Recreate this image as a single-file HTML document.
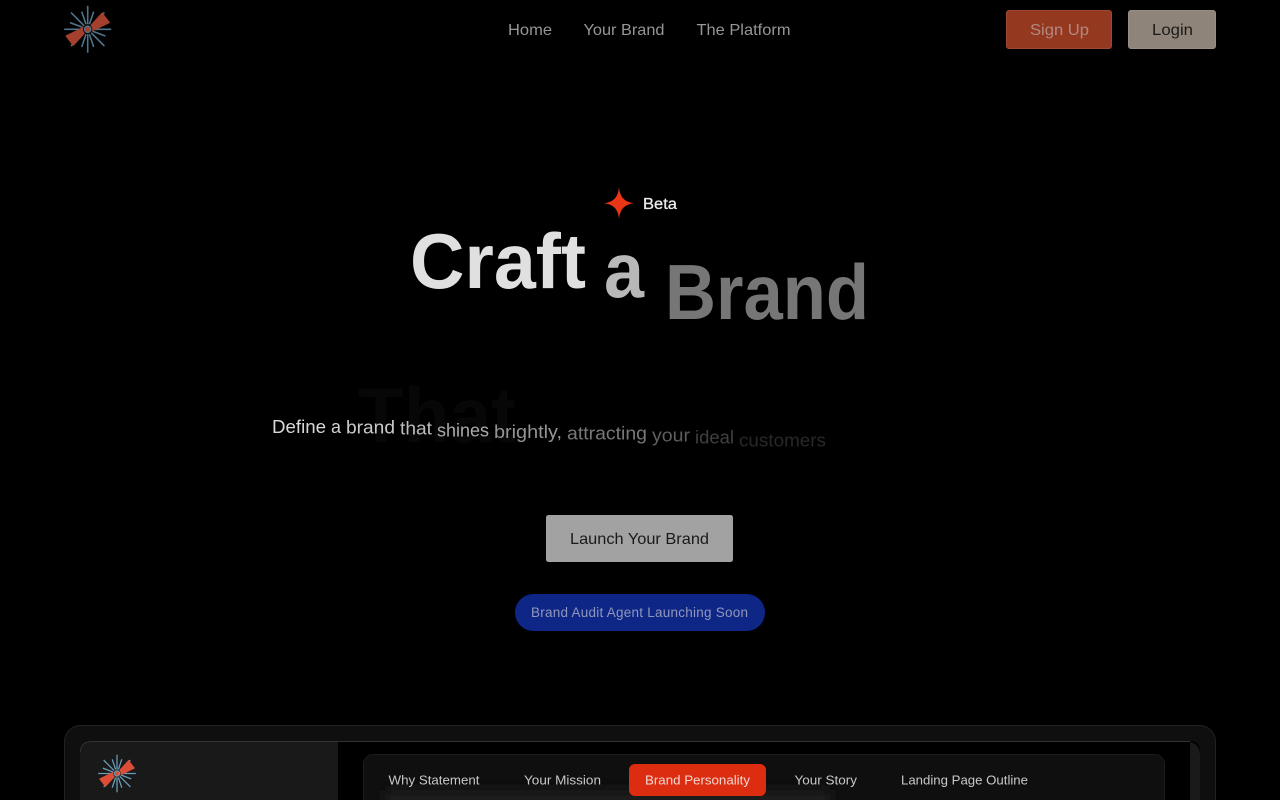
<!DOCTYPE html>
<html lang="en">
<head>
<meta charset="utf-8">
<title>Craft a Brand</title>
<style>
html,body{margin:0;padding:0;background:#000;width:1280px;height:800px;overflow:hidden}
svg{display:block;position:absolute;left:0;top:0}
text{font-family:"Liberation Sans",sans-serif}
</style>
</head>
<body>
<svg width="1280" height="800" viewBox="0 0 1280 800" xmlns="http://www.w3.org/2000/svg">
<defs>
<filter id="b6" x="-20%" y="-150%" width="140%" height="400%"><feGaussianBlur stdDeviation="6"/></filter>
<clipPath id="tabclip"><rect x="364" y="755" width="800" height="70" rx="10"/></clipPath>
<g id="rays">
<path d="M0-23.5V-5M0 5V23.5M-23.5 0H-5M5 0H23.5M-16.7-16.7L-3.5-3.5M3.5 3.5L16.7 16.7M-16.7 16.7L-3.5 3.5M3.5-3.5L16.7-16.7M-6-17.7L-1.7-5M1.7 5L6 17.7M6-17.7L1.7-5M-1.7 5L-6 17.7M-17.7-6.7L-5-1.9M5 1.9L17.7 6.7M-17.7 6.7L-5 1.9M5-1.9L17.7-6.7" fill="none"/>
</g>
<path id="wedges" d="M3-4.5L14.5-17L22.5-6.5L4 2.5ZM-3 4.5L-14.5 17L-22.5 6.5L-4-2.5Z"/>
</defs>
<rect width="1280" height="800" fill="#000"/>

<!-- nav logo -->
<g transform="translate(87.7 29.3)">
<use href="#rays" stroke="#4f7389" stroke-width="1.6"/>
<use href="#wedges" fill="#a5402f"/>
<circle r="4.7" fill="#000"/>
<circle r="3.9" fill="#4f7389"/>
<rect x="-2.3" y="-2.3" width="4.6" height="4.6" fill="#a5402f"/>
</g>

<!-- nav links -->
<g font-size="16" fill="#969696">
<text x="508" y="35" textLength="44" lengthAdjust="spacingAndGlyphs">Home</text>
<text x="583.5" y="35" textLength="81" lengthAdjust="spacingAndGlyphs">Your Brand</text>
<text x="696.5" y="35" textLength="94" lengthAdjust="spacingAndGlyphs">The Platform</text>
</g>

<!-- nav buttons -->
<rect x="1006.5" y="10.5" width="105" height="38" rx="2.5" fill="#943820" stroke="#9e4830"/>
<text x="1030" y="35" font-size="16" fill="#b08a80" textLength="59" lengthAdjust="spacingAndGlyphs">Sign Up</text>
<rect x="1128.5" y="10.5" width="87" height="38" rx="2.5" fill="#8e847a" stroke="#988e84"/>
<text x="1152" y="35" font-size="16" fill="#1c1a18" textLength="41" lengthAdjust="spacingAndGlyphs">Login</text>

<!-- beta -->
<path d="M619 187Q620 201.9 634 203.2Q620 204.5 619 219Q618 204.5 604 203.2Q618 201.9 619 187Z" fill="#ea3519"/>
<text x="643" y="209" font-size="15.5" fill="#eee" stroke="#eee" stroke-width=".25" textLength="34" lengthAdjust="spacingAndGlyphs">Beta</text>

<!-- headline -->
<g font-size="78" font-weight="700">
<text x="410" y="288" fill="#e0e0e0" textLength="176" lengthAdjust="spacingAndGlyphs">Craft</text>
<text x="604" y="297" fill="#b8b8b8" textLength="40" lengthAdjust="spacingAndGlyphs">a</text>
<text x="665" y="319" fill="#767676" textLength="204" lengthAdjust="spacingAndGlyphs">Brand</text>
<text x="358" y="442" fill="#070707" textLength="158" lengthAdjust="spacingAndGlyphs">That</text>
</g>

<!-- subtitle -->
<g font-size="18">
<text x="272" y="433" fill="#d8d8d8" textLength="54" lengthAdjust="spacingAndGlyphs">Define</text>
<text x="331" y="433" fill="#d0d0d0" textLength="10" lengthAdjust="spacingAndGlyphs">a</text>
<text x="346" y="433.5" fill="#cacaca" textLength="49" lengthAdjust="spacingAndGlyphs">brand</text>
<text x="400" y="434.5" fill="#bbb" textLength="32" lengthAdjust="spacingAndGlyphs">that</text>
<text x="437" y="436.5" fill="#aaa" textLength="52" lengthAdjust="spacingAndGlyphs">shines</text>
<text x="494" y="438" fill="#949494" textLength="68" lengthAdjust="spacingAndGlyphs">brightly,</text>
<text x="567" y="439.5" fill="#777" textLength="80" lengthAdjust="spacingAndGlyphs">attracting</text>
<text x="652" y="441.5" fill="#5e5e5e" textLength="38" lengthAdjust="spacingAndGlyphs">your</text>
<text x="695" y="443.5" fill="#404040" textLength="39" lengthAdjust="spacingAndGlyphs">ideal</text>
<text x="739" y="446.5" fill="#282828" textLength="87" lengthAdjust="spacingAndGlyphs">customers</text>
</g>

<!-- CTA -->
<rect x="546" y="515" width="187" height="47" rx="2.5" fill="#a2a2a2"/>
<text x="570" y="544" font-size="16" fill="#1a1a1a" textLength="139" lengthAdjust="spacingAndGlyphs">Launch Your Brand</text>
<rect x="515" y="594" width="250" height="37" rx="18.5" fill="#0e2686"/>
<text x="531" y="617" font-size="13.5" fill="#9097ba" textLength="217" lengthAdjust="spacing">Brand Audit Agent Launching Soon</text>

<!-- app preview -->
<rect x="64.5" y="725.5" width="1151" height="100" rx="16" fill="#0f0f0f" stroke="#222"/>
<path d="M80 752Q80 741 91 741H1190Q1200 741 1200 752V820H80Z" fill="#000"/>
<path d="M80 820V752Q80 742 90 742H338V820Z" fill="#191919"/>
<path d="M1190 742Q1200 744 1200 756V820H1190Z" fill="#1a1a1a"/>
<path d="M80.5 752Q80.5 741.5 92 741.5H1190" fill="none" stroke="#333"/>

<g transform="translate(117 773.5) scale(.8)">
<use href="#rays" stroke="#6a9cb8" stroke-width="1.6"/>
<use href="#wedges" fill="#dc4d38"/>
<circle r="4.7" fill="#191919"/>
<circle r="4" fill="#6a9cb8"/>
<circle r="2.6" fill="#dc4d38"/>
</g>

<rect x="363.5" y="754.5" width="801" height="70" rx="10" fill="#0f0f0f" stroke="#1c1c1c"/>
<g clip-path="url(#tabclip)"><rect x="385" y="790" width="445" height="26" fill="#1c1c1c" filter="url(#b6)"/></g>
<rect x="629" y="764" width="137" height="32" rx="6" fill="#dc2d11"/>
<g font-size="13" fill="#c8c8c8">
<text x="388.5" y="784.5" textLength="91" lengthAdjust="spacingAndGlyphs">Why Statement</text>
<text x="524" y="784.5" textLength="77" lengthAdjust="spacingAndGlyphs">Your Mission</text>
<text x="645" y="784.5" fill="#f0d8d2" textLength="105" lengthAdjust="spacingAndGlyphs">Brand Personality</text>
<text x="794.5" y="784.5" textLength="62.5" lengthAdjust="spacingAndGlyphs">Your Story</text>
<text x="901" y="784.5" textLength="127" lengthAdjust="spacingAndGlyphs">Landing Page Outline</text>
</g>
</svg>
</body>
</html>
